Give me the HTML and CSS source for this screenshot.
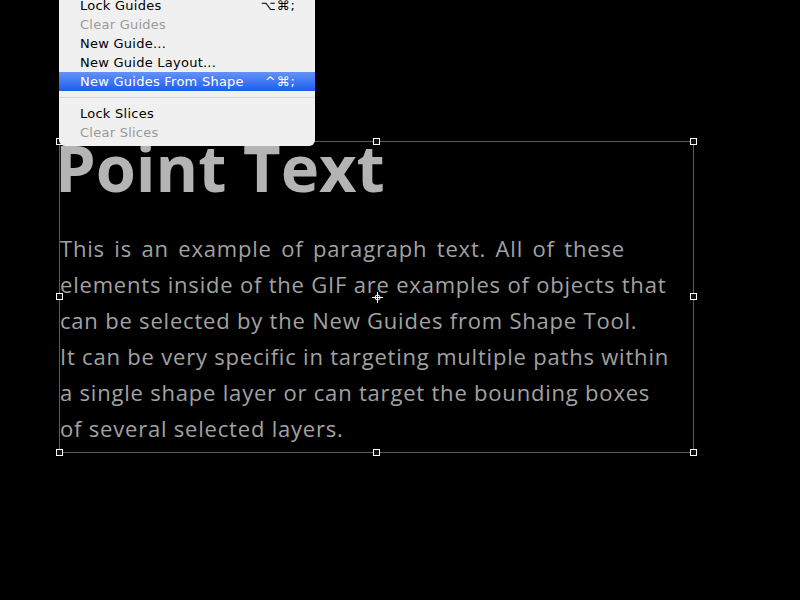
FILE: index.html
```html
<!DOCTYPE html>
<html lang="en">
<head>
<meta charset="UTF-8">
<title>New Guides From Shape</title>
<link rel="stylesheet" href="styles.css">
</head>
<body>
  <div class="canvas">
    <div class="text-layer">
      <h1 class="point-text">Point Text</h1>
      <p class="para-text"><span class="loose">This is an example of paragraph text. All of these</span><br>
        elements inside of the GIF are examples of objects that<br>
        can be selected by the New Guides from Shape Tool.<br>
        It can be very specific in targeting multiple paths within<br>
        a single shape layer or can target the bounding boxes<br>
        of several selected layers.</p>
    </div>

    <!-- transform box round the selected layers -->
    <div class="bounds">
      <span class="handle h-tl"></span>
      <span class="handle h-tc"></span>
      <span class="handle h-tr"></span>
      <span class="handle h-ml"></span>
      <span class="handle h-mr"></span>
      <span class="handle h-bl"></span>
      <span class="handle h-bc"></span>
      <span class="handle h-br"></span>
      <svg class="pivot" width="11" height="11" viewBox="0 0 11 11">
        <circle cx="5.5" cy="5.5" r="2.5" fill="none" stroke="#fff" stroke-width="1"/>
        <path d="M5.5 0v11M0 5.5h11" stroke="#fff" stroke-width="1"/>
      </svg>
    </div>

    <ul class="menu">
      <li class="menu-item">Lock Guides <span class="key">⌥⌘;</span></li>
      <li class="menu-item disabled">Clear Guides</li>
      <li class="menu-item">New Guide...</li>
      <li class="menu-item">New Guide Layout...</li>
      <li class="menu-item selected">New Guides From Shape <span class="key">^⌘;</span></li>
      <li class="menu-sep"></li>
      <li class="menu-item">Lock Slices</li>
      <li class="menu-item disabled">Clear Slices</li>
    </ul>
  </div>
</body>
</html>
```

FILE: styles.css
```css
body {
  margin: 0;
  background-color: #000;
  font-family: "Open Sans", sans-serif;
}

.canvas {
  position: relative;
  width: 800px;
  height: 600px;
  overflow: hidden;
}

.text-layer {
  padding: 128px 0 0 55px;
}

.point-text {
  margin: 0;
  font-size: 65px;
  line-height: 78px;
  font-weight: 700;
  color: #b4b4b4;
  letter-spacing: -0.1px;
}

.para-text {
  margin: 24px 0 0 5px;
  font-size: 22px;
  line-height: 36px;
  color: #a2a2a2;
  letter-spacing: 0.8px;
}

.loose {
  word-spacing: 3px;
}

.bounds {
  position: absolute;
  left: 59px;
  top: 141px;
  width: 633px;
  height: 310px;
  border: 1px solid #5c5c5c;
}

.handle {
  position: absolute;
  width: 5px;
  height: 5px;
  border: 1px solid #fff;
  background-color: #111;
}

.h-tl { left: -4px; top: -4px; }
.h-tc { left: 313px; top: -4px; }
.h-tr { right: -4px; top: -4px; }
.h-ml { left: -4px; top: 151px; }
.h-mr { right: -4px; top: 151px; }
.h-bl { left: -4px; bottom: -4px; }
.h-bc { left: 313px; bottom: -4px; }
.h-br { right: -4px; bottom: -4px; }

.pivot {
  position: absolute;
  left: 312px;
  top: 150px;
}

.menu {
  position: absolute;
  left: 59px;
  top: -4px;
  width: 256px;
  margin: 0;
  padding: 0 0 4px;
  list-style: none;
  background-color: #f0f0f0;
  border-radius: 0 0 6px 6px;
  font-family: "DejaVu Sans", sans-serif;
  font-size: 13px;
  letter-spacing: 0.25px;
  color: #000;
}

.menu-item {
  display: flex;
  justify-content: space-between;
  height: 19px;
  line-height: 19px;
  padding: 0 19px 0 21px;
}

.menu-item.disabled {
  color: #9a9a9a;
}

.menu-item.selected {
  background: linear-gradient(#6593f6, #1c5cf0);
  color: #fff;
}

.key {
  letter-spacing: 1px;
}

.menu-sep {
  height: 1px;
  margin: 6px 0 6px 1px;
  background-color: #d8d8d8;
}
```
